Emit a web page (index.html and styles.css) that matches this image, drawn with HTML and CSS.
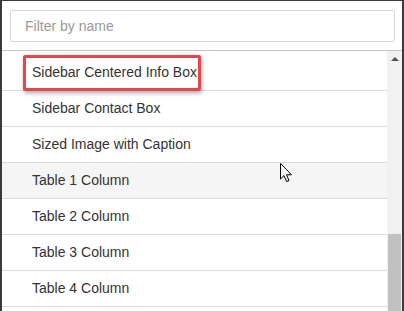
FILE: index.html
```html
<!DOCTYPE html>
<html lang="en">
<head>
    <meta charset="UTF-8">
    <meta name="viewport" content="width=device-width, initial-scale=1.0">
    <title>Snippet Picker</title>
    <link rel="stylesheet" href="styles.css">
</head>
<body>
    <div class="frame">
        <!-- Filter -->
        <div class="filter">
            <input type="text" class="filter-input" placeholder="Filter by name">
        </div>

        <!-- List + scrollbar -->
        <div class="list-wrap">
            <ul class="list">
                <li class="item">Sidebar Centered Info Box</li>
                <li class="item">Sidebar Contact Box</li>
                <li class="item">Sized Image with Caption</li>
                <li class="item hover">Table 1 Column</li>
                <li class="item">Table 2 Column</li>
                <li class="item">Table 3 Column</li>
                <li class="item">Table 4 Column</li>
            </ul>
            <div class="scrollbar">
                <div class="scroll-up"></div>
                <div class="scroll-track"></div>
                <div class="scroll-thumb"></div>
            </div>
        </div>

        <!-- annotation highlight -->
        <div class="highlight"></div>

        <!-- mouse pointer -->
        <svg class="cursor" width="13" height="20" viewBox="0 0 13 20">
            <path d="M0.5 0.5 L0.5 16 L4 12.6 L6.6 18.6 L9 17.6 L6.5 11.8 L11.5 11.8 Z" fill="#fff" stroke="#000" stroke-width="1" stroke-linejoin="round"/>
        </svg>
    </div>
</body>
</html>
```

FILE: styles.css
```css
body {
    margin: 0;
    font-family: "Liberation Sans", Arial, sans-serif;
    background: #fff;
}
.frame {
    position: relative;
    width: 404px;
    height: 311px;
    box-sizing: border-box;
    border-top: 1px solid #3a3a3a;
    border-left: 2px solid #3a3a3a;
    border-right: 2px solid #3a3a3a;
    overflow: hidden;
    display: flex;
    flex-direction: column;
}
.filter {
    padding: 9px 7px 8px 8px;
    border-bottom: 1px solid #c4c4c4;
}
.filter-input {
    display: block;
    width: 100%;
    height: 32px;
    box-sizing: border-box;
    padding: 0 14px;
    border: 1px solid #d6d6d6;
    border-radius: 2px;
    font-family: inherit;
    font-size: 14px;
    color: #333;
    outline: none;
}
.filter-input::placeholder {
    color: #999;
}
.list-wrap {
    flex: 1;
    display: flex;
    min-height: 0;
}
.list {
    flex: 1;
    list-style: none;
    margin: 0;
    padding: 4px 0 0;
    overflow: hidden;
}
.item {
    height: 35px;
    line-height: 35px;
    padding-left: 30px;
    border-bottom: 1px solid #dcdcdc;
    font-size: 14px;
    color: #333;
    white-space: nowrap;
}
.item.hover {
    background: #f5f5f5;
}
.scrollbar {
    width: 15px;
    background: #f1f1f1;
    display: flex;
    flex-direction: column;
}
.scroll-up {
    height: 17px;
    position: relative;
}
.scroll-up::after {
    content: "";
    position: absolute;
    left: 4px;
    top: 6px;
    border-left: 4px solid transparent;
    border-right: 4px solid transparent;
    border-bottom: 4px solid #505050;
}
.scroll-track {
    flex: 1;
}
.scroll-thumb {
    height: 77px;
    margin: 0 1px;
    background: #c1c1c1;
}
.highlight {
    position: absolute;
    left: 21px;
    top: 54px;
    width: 172px;
    height: 30px;
    border: 3px solid #e2474e;
    border-radius: 2px;
    box-shadow: 1px 2px 4px rgba(0, 0, 0, 0.35);
}
.cursor {
    position: absolute;
    left: 278px;
    top: 162px;
}
```
